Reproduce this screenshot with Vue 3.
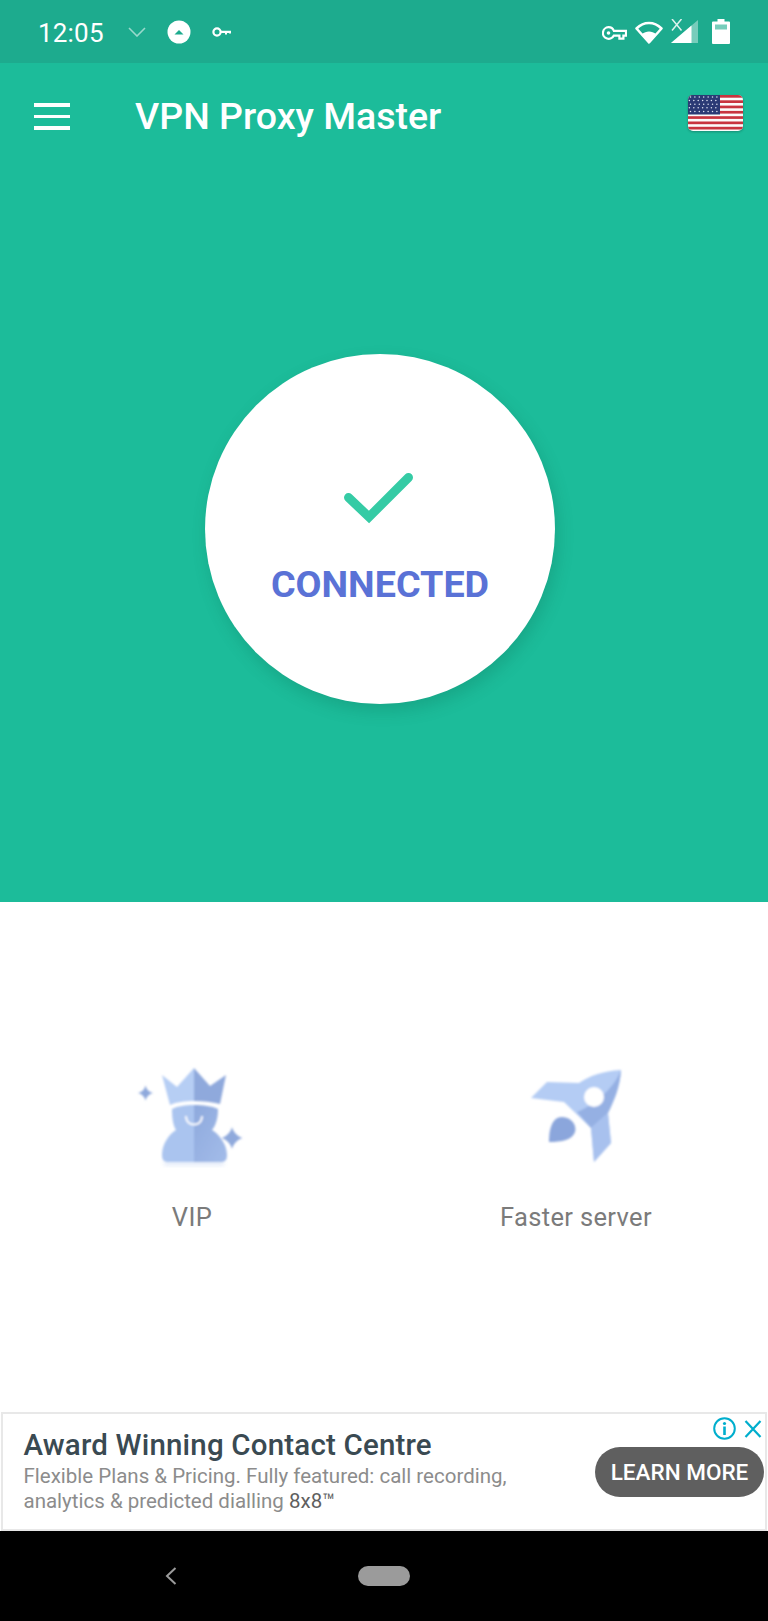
<script setup>
const stripes = [0, 1, 2, 3, 4, 5, 6]
const stars = []
for (let r = 0; r < 5; r++) {
  for (let c = 0; c < 7; c++) stars.push({ x: 2.5 + c * 4.4 - (r % 2) * 1.1, y: 2 + r * 3.6 })
}
</script>

<template>
  <div class="screen">
    <div class="top">
      <div class="status">
        <span class="time">12:05</span>
        <svg class="chev" width="18" height="10" viewBox="0 0 18 10"><path d="M1 1l8 8 8-8" fill="none" stroke="#fff" stroke-width="1.6" opacity=".55" /></svg>
        <svg class="up" width="24" height="24" viewBox="0 0 24 24"><circle cx="12" cy="12" r="11.5" fill="#fff" /><path d="M7.5 14.5L12 10l4.5 4.5z" fill="#1dab8e" /></svg>
        <svg class="key1" width="20" height="12" viewBox="0 0 20 12"><circle cx="5" cy="6" r="3.6" fill="none" stroke="#fff" stroke-width="2.200" /><path d="M8 4.800h11v2.800h-2V7h-2v1.400h-2V7H8z" fill="#fff" /></svg>
        <span class="spacer"></span>
        <svg class="key2" width="25" height="14" viewBox="0 0 25 14"><path d="M6.5 1.2a5.8 5.8 0 0 1 5.4 3.6H24v4.800h-2.600v3h-4v-3h-5.500a5.800 5.800 0 1 1-5.400-8.400z" fill="none" stroke="#fff" stroke-width="2.200" /><circle cx="6.500" cy="7" r="1.800" fill="#fff" /></svg>
        <svg class="wifi" width="28" height="23" viewBox="0 0 28 23"><path d="M14 21.500L1.500 7.500C5 4 9.300 2 14 2s9 2 12.500 5.500z" fill="none" stroke="#fff" stroke-width="2.500" stroke-linejoin="round" /><path d="M14 21L7 13c2-1.700 4.500-2.600 7-2.600s5 .9 7 2.600z" fill="#fff" /></svg>
        <svg class="signal" width="28" height="25" viewBox="0 0 28 25"><path d="M1 24L28 1v23z" fill="#fff" opacity=".4" /><path d="M1 24l20.500-17.500V24z" fill="#fff" /><path d="M2 0l9.500 11.500M11.500 0L2 11.500" stroke="#fff" stroke-width="1.500" opacity=".85" /></svg>
        <svg class="batt" width="18" height="25" viewBox="0 0 18 25"><path d="M5.500 0h7v2.500H17a1 1 0 0 1 1 1V24a1 1 0 0 1-1 1H1a1 1 0 0 1-1-1V3.500a1 1 0 0 1 1-1h4.500z" fill="#fff" /><rect x="3" y="5.500" width="12" height="5" fill="#1dab8e" opacity=".6" /></svg>
      </div>
      <div class="bar">
        <div class="menu"><i></i><i></i><i></i></div>
        <h1 class="title">VPN Proxy Master</h1>
        <svg class="flag" width="55" height="37" viewBox="0 0 55 37">
          <defs><clipPath id="fc"><rect width="55" height="36" rx="5" /></clipPath></defs>
          <g clip-path="url(#fc)">
            <rect width="55" height="36" fill="#fbfbfb" />
            <rect v-for="s in stripes" :key="s" x="0" :y="s * 5.300" width="55" height="2.700" fill="#c8343f" />
            <rect width="32" height="19.500" fill="#2b3a75" />
            <circle v-for="(st, i) in stars" :key="i" :cx="st.x" :cy="st.y" r=".75" fill="#dfe3f2" />
          </g>
        </svg>
      </div>
      <div class="hero">
        <div class="circle">
          <svg class="check" width="69" height="52" viewBox="0 0 69 52"><path d="M4.500 24.500l20.500 19.500L64.500 4.500" fill="none" stroke="#35cba5" stroke-width="9" stroke-linecap="round" /></svg>
          <div class="conn">CONNECTED</div>
        </div>
      </div>
    </div>

    <div class="features">
      <div class="feature">
        <svg class="ficon" width="140" height="125" viewBox="0 0 140 125">
          <defs>
            <filter id="soft" x="-20%" y="-20%" width="140%" height="140%"><feGaussianBlur stdDeviation=".8" /></filter>
            <filter id="sh" x="-20%" y="-100%" width="140%" height="300%"><feGaussianBlur stdDeviation="2" /></filter>
            <linearGradient id="bodyR" x1="0" y1="0" x2="1" y2="1"><stop offset="0" stop-color="#8ea9dd" /><stop offset="1" stop-color="#a3bce9" /></linearGradient>
          </defs>
          <rect x="42" y="112" width="60" height="3" fill="#c9d8f3" filter="url(#sh)" opacity=".7" />
          <g filter="url(#soft)">
            <path d="M72 55C63 55 56 56 50 59 50 68 51 75 54 80 46 85 40 95 40 105 40 110 42 112 46 112H72z" fill="#aac4ef" />
            <path d="M72 55C81 55 90 56 96 59 96 68 94 75 90 80 98 85 105 95 105 105 105 110 103 112 99 112H72z" fill="url(#bodyR)" />
            <path d="M40 25l15 12L72 18v33c-10 0-17 1-24 4z" fill="#b6cef4" />
            <path d="M104 25L88 36 72 18v33c10 0 18 1 26 3z" fill="#8fa9dc" />
            <path d="M64 67c1 10 15 10 16 0" fill="none" stroke="#fff" stroke-width="2" stroke-linecap="round" />
            <path d="M23.500 35.500c1 4 3.500 6.500 7.500 7.500-4 1-6.500 3.500-7.500 7.500-1-4-3.500-6.500-7.500-7.500 4-1 6.500-3.500 7.500-7.500z" fill="#8fa9dc" />
            <path d="M110 77c1.500 5.500 5 9 10.500 11-5.500 2-9 5.500-10.500 11-1.500-5.500-5-9-10.500-11 5.500-2 9-5.500 10.500-11z" fill="#8fa9dc" />
          </g>
        </svg>
        <span class="flabel">VIP</span>
      </div>
      <div class="feature">
        <svg class="ficon" width="130" height="125" viewBox="0 0 130 125">
          <g filter="url(#soft)">
            <path d="M110 20C92 21 78 26 68 33L36 32 20 48l33 4 27 26 3 34 17-19-3-30c6-12 12-26 13-43z" fill="#b4ccf4" />
            <path d="M110 20c-1 17-7 31-13 43L80 78 66 62c20-8 38-26 44-42z" fill="#95b0e3" />
            <path d="M80 78l17-15 3 30-17 19z" fill="#a8c1ee" />
            <circle cx="83" cy="47" r="10" fill="#fff" />
            <path d="M38 92c0-13 3-25 13-25s15 9 13 15c-3 8-13 10-26 10z" fill="#8ba6dc" />
          </g>
        </svg>
        <span class="flabel">Faster server</span>
      </div>
    </div>

    <div class="ad">
      <div class="adtext">
        <div class="adtitle">Award Winning Contact Centre</div>
        <div class="addesc">Flexible Plans &amp; Pricing. Fully featured: call recording,<br />analytics &amp; predicted dialling <span class="brand">8x8™</span></div>
      </div>
      <button class="learn">LEARN MORE</button>
      <div class="adicons">
        <svg width="23" height="23" viewBox="0 0 23 23"><circle cx="11.500" cy="11.500" r="10.300" fill="none" stroke="#00aecd" stroke-width="2" /><rect x="10.200" y="9.500" width="2.600" height="8.500" fill="#00aecd" /><circle cx="11.500" cy="6.500" r="1.600" fill="#00aecd" /></svg>
        <svg width="18" height="18" viewBox="0 0 18 18"><path d="M1.500 1l15 16M16.500 1l-15 16" stroke="#00aecd" stroke-width="2.200" /></svg>
      </div>
    </div>

    <div class="nav">
      <svg width="12" height="18" viewBox="0 0 12 18"><path d="M10.500 1L2 9l8.500 8" fill="none" stroke="#9b9b9b" stroke-width="2" /></svg>
      <span class="pill"></span>
    </div>
  </div>
</template>

<style scoped>
.screen {
  width: 768px;
  height: 1621px;
  display: flex;
  flex-direction: column;
  overflow: hidden;
  background: #fff;
  font-family: Roboto, "Liberation Sans", sans-serif;
}
.top {
  height: 902px;
  display: flex;
  flex-direction: column;
  background: #1cbc9a;
}
.status {
  height: 63px;
  flex: none;
  display: flex;
  align-items: center;
  padding: 0 38px 0 38px;
  background: #1dab8e;
  color: #fff;
}
.time { font-size: 26px; line-height: 1; width: 90px; padding-top: 2px; letter-spacing: .2px; }
.chev { margin-right: 21px; margin-top: 1px; }
.up { margin-right: 21px; margin-top: 1px; }
.key1 { margin-top: 1px; }
.spacer { flex: 1; }
.key2 { margin-right: 8px; margin-top: 2px; }
.wifi { margin-right: 7px; margin-top: 1px; }
.signal { margin-right: 14px; }
.bar {
  height: 108px;
  flex: none;
  display: flex;
  align-items: center;
  padding: 0 25px 0 34px;
}
.menu { width: 36px; display: flex; flex-direction: column; gap: 8px; margin-top: -1px; }
.menu i { display: block; height: 3.500px; background: #fff; }
.title {
  flex: 1;
  margin: 0 0 0 65px;
  font-size: 37.500px;
  font-weight: 500;
  color: #fff;
  line-height: 1;
}
.flag { filter: drop-shadow(0 1px 1px rgba(0,0,0,.25)); margin-bottom: 8px; }
.hero {
  flex: 1;
  display: flex;
  align-items: center;
  justify-content: center;
  padding: 0 8px 16px 0;
}
.circle {
  width: 350px;
  height: 350px;
  border-radius: 50%;
  background: #fff;
  box-shadow: 3px 7px 16px rgba(10, 90, 70, .22);
  display: flex;
  flex-direction: column;
  align-items: center;
  padding-top: 119px;
  box-sizing: border-box;
}
.check { margin-right: 3px; }
.conn {
  margin-top: 37px;
  font-size: 37.700px;
  font-weight: 700;
  line-height: 44px;
  color: #5a72d6;
}
.features {
  flex: 1;
  display: flex;
  padding-top: 148px;
}
.feature {
  flex: 1;
  display: flex;
  flex-direction: column;
  align-items: center;
}
.ficon { display: block; margin-bottom: 27px; }
.flabel { font-size: 25.500px; line-height: 30px; color: #7b7b7b; letter-spacing: .35px; }
.ad {
  position: relative;
  height: 119px;
  flex: none;
  box-sizing: border-box;
  margin: 0 1px;
  border: 2px solid #e8e8e8;
  display: flex;
  align-items: center;
  padding: 0 1px 0 20.500px;
  background: #fff;
}
.adtext { flex: 1; min-width: 0; }
.adtitle { font-size: 29.500px; font-weight: 500; color: #3a4a52; line-height: 32px; letter-spacing: .18px; }
.addesc { margin-top: 3px; font-size: 20.500px; line-height: 25.500px; color: #8c8c8c; }
.brand { color: #5f5f5f; }
.learn {
  width: 169px;
  height: 50px;
  margin-top: 1px;
  border: 0;
  padding: 0;
  border-radius: 25px;
  background: #5f5f5f;
  color: #fff;
  font: 500 22.500px Roboto, "Liberation Sans", sans-serif;
}
.adicons {
  position: absolute;
  top: 3px;
  right: 3px;
  display: flex;
  align-items: center;
  gap: 8px;
}
.nav {
  flex: none;
  height: 90px;
  background: #000;
  display: flex;
  align-items: center;
  padding-left: 165px;
  gap: 181px;
}
.pill { width: 52px; height: 20px; border-radius: 10px; background: #9b9b9b; }
</style>

<style>
html, body { margin: 0; padding: 0; background: #fff; }
</style>
